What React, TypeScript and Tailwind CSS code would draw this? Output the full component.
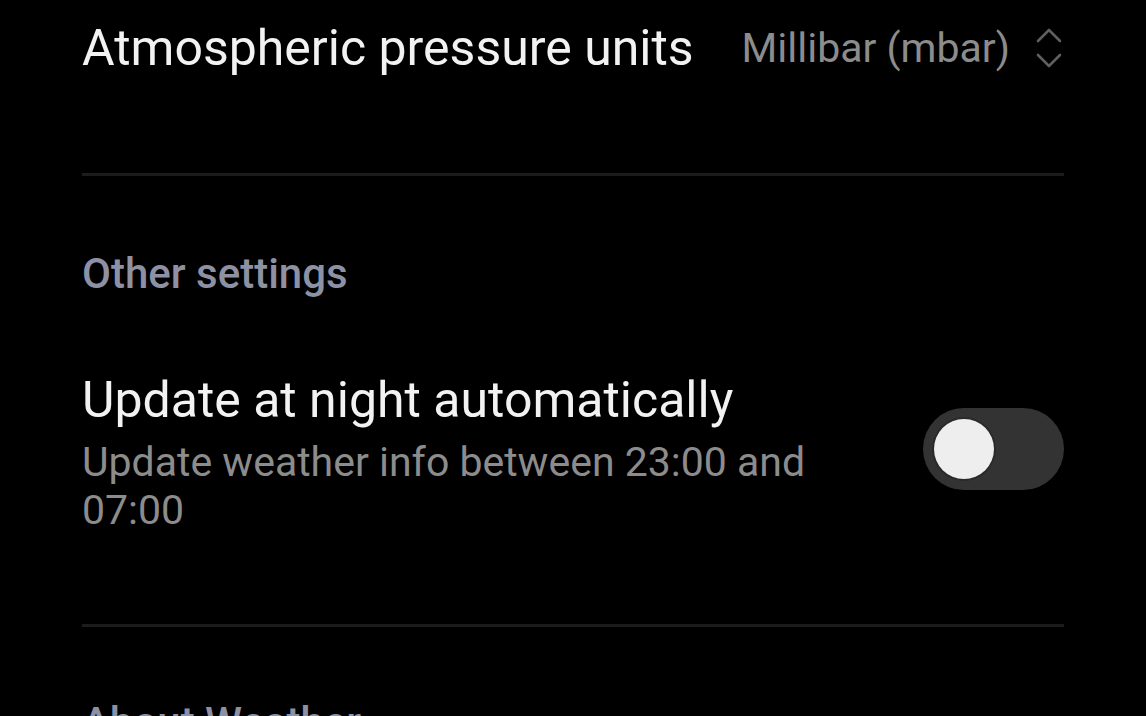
import React from 'react';

const ChevronUpDown: React.FC = () => (
  <svg width="30" height="48" viewBox="0 0 30 48" fill="none" stroke="#5f5f5f" strokeWidth="2.6" strokeLinecap="round" strokeLinejoin="round">
    <path d="M4 17 L15 6 L26 17" />
    <path d="M4 31 L15 42 L26 31" />
  </svg>
);

const Toggle: React.FC<{ on?: boolean }> = ({ on = false }) => (
  <div className="mt-[37px] flex h-[82px] w-[141px] shrink-0 items-center rounded-full bg-[#333333] px-[11px]">
    <div
      className={`h-[60px] w-[60px] rounded-full bg-[#eeeeee] ring-2 ring-[#2a2a2a] ${on ? 'ml-auto' : ''}`}
    />
  </div>
);

const App: React.FC = () => {
  return (
    <div
      className="h-[716px] w-[1146px] overflow-hidden bg-black px-[82px]"
      style={{ fontFamily: 'Roboto, "Noto Sans", sans-serif' }}
    >
      {/* pressure units row */}
      <div className="flex h-[96px] items-center justify-between">
        <span className="text-[50px] leading-none text-[#f2f2f2]">Atmospheric pressure units</span>
        <div className="flex items-center gap-[24px]">
          <span className="text-[41px] leading-none text-[#8c8c8c]">Millibar (mbar)</span>
          <ChevronUpDown />
        </div>
      </div>

      <div className="mt-[77px] h-[3px] bg-[#1c1c1c]" />

      {/* section header */}
      <div className="pt-[77px] text-[42px] font-medium leading-none text-[#8d91a3]">Other settings</div>

      {/* night update row */}
      <div className="mt-[76px] flex items-start justify-between">
        <div className="flex flex-col">
          <span className="text-[50px] leading-[58px] text-[#f2f2f2]">Update at night automatically</span>
          <span className="mt-[9px] w-[790px] text-[41px] leading-[48px] text-[#8c8c8c]">
            Update weather info between 23:00 and 07:00
          </span>
        </div>
        <Toggle />
      </div>

      <div className="mt-[90px] h-[3px] bg-[#1c1c1c]" />

      <div className="pt-[75px] text-[42px] font-medium leading-none text-[#8d91a3]">About Weather</div>
    </div>
  );
};

export default App;
